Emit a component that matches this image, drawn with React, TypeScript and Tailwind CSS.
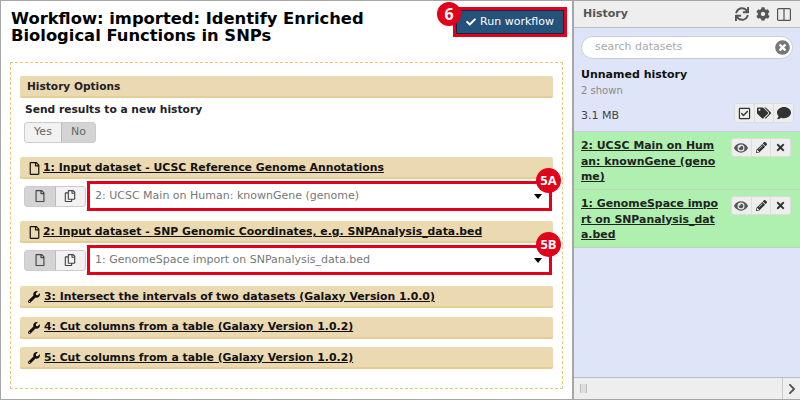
import { FaCheck, FaChevronRight, FaCog, FaComment, FaEye, FaPencilAlt, FaRegCheckSquare, FaRegCopy, FaRegFile, FaSync, FaTags, FaTimes, FaTimesCircle, FaWrench } from "react-icons/fa";
import type { ReactNode } from "react";

const Badge = ({ label, className }: { label: string; className: string }) => (
    <span className={`absolute flex items-center justify-center rounded-full bg-[#e2001a] text-white font-bold font-['Open_Sans',sans-serif] ${className}`}>{label}</span>
);

const SectionHeader = ({ icon, children }: { icon: ReactNode; children: ReactNode }) => (
    <div className="flex items-center gap-[4px] h-[22px] pl-[8px] rounded-[2px] bg-[#ebd9b2] shadow-[inset_0_-2px_0_#e6cd96] text-[10.85px] font-bold text-[#111]">
        {icon}
        <span className="underline">{children}</span>
    </div>
);

const DatasetRow = ({ value, badge }: { value: string; badge: string }) => (
    <div className="relative flex items-center mt-[2px] h-[30px]">
        <div className="flex ml-[4px] h-[21px] w-[62px] rounded-[3px] border border-[#ccc] bg-[#f2f2f2] text-[#444]">
            <span className="flex flex-1 items-center justify-center bg-[#d4d4d4] border-r border-[#bbb]"><FaRegFile size={12} /></span>
            <span className="flex flex-1 items-center justify-center"><FaRegCopy size={12} /></span>
        </div>
        <div className="flex items-center justify-between ml-[1px] h-[30px] w-[465px] border-[3px] border-[#e2001a] bg-white pl-[5px] pr-[7px] text-[11px] text-[#777]">
            <span>{value}</span>
            <span className="w-0 h-0 border-x-[4px] border-x-transparent border-t-[5px] border-t-black" />
        </div>
        <Badge label={badge} className="right-[-8px] top-[-13px] w-[25px] h-[25px] text-[13px]" />
    </div>
);

const HistoryButtons = ({ icons, className }: { icons: ReactNode[]; className: string }) => (
    <div className={`flex rounded-[3px] border border-[#ddd] bg-[#eee] text-[#333] ${className}`}>
        {icons.map((icon, i) => (
            <span key={i} className="flex flex-1 items-center justify-center border-r border-[#ddd] last:border-r-0">{icon}</span>
        ))}
    </div>
);

const Dataset = ({ lines }: { lines: string[] }) => (
    <div className="flex justify-between h-[58px] pl-[7px] pr-[9px] pt-[6px] bg-[#afefaf] border-b border-[#bcd5bc]">
        <div className="text-[10.9px] leading-[15.5px] font-bold text-[#222] underline">
            {lines.map((line) => <div key={line}>{line}</div>)}
        </div>
        <HistoryButtons className="w-[60px] h-[19px]" icons={[<FaEye size={14} className="text-[#555]" />, <FaPencilAlt size={11} />, <FaTimes size={11} />]} />
    </div>
);

export default function App() {
    return (
        <div className="flex w-[800px] h-[400px] border-y border-l border-[#a6a6a6] bg-white font-['DejaVu_Sans',sans-serif] overflow-hidden">
            <main className="w-[571px] shrink-0 px-[9px] pt-[9px]">
                <div className="flex justify-between h-[52px]">
                    <h1 className="w-[390px] pl-[1px] text-[16.35px] leading-[17px] font-bold text-black">Workflow: imported: Identify Enriched Biological Functions in SNPs</h1>
                    <div className="relative -mt-[3px] -mr-[4px]">
                        <div className="h-[30px] w-[114px] border-[3px] border-[#e2001a]">
                            <button className="flex items-center justify-center gap-[4px] h-full w-full border border-[#16293c] bg-[#25527b] text-[11px] text-white">
                                <FaCheck size={10} />
                                Run workflow
                            </button>
                        </div>
                        <Badge label="6" className="left-[-16px] top-[-5px] w-[24px] h-[24px] text-[16px]" />
                    </div>
                </div>
                <section className="h-[327px] border border-dashed border-[#ecc57b] px-[9px] pt-[13px]">
                    <div className="flex items-center h-[22px] pl-[7px] rounded-[2px] bg-[#ebd9b2] shadow-[inset_0_-2px_0_#e6cd96] text-[10.6px] font-bold text-[#222]">History Options</div>
                    <p className="mt-[5px] ml-[5px] text-[10.7px] leading-[14px] font-bold text-[#222]">Send results to a new history</p>
                    <div className="flex mt-[5px] ml-[4px] w-[72px] h-[21px] rounded-[3px] border border-[#ccc] bg-[#f2f2f2] text-[11px] text-[#666]">
                        <span className="flex flex-1 items-center justify-center border-r border-[#bbb]">Yes</span>
                        <span className="flex w-[33px] items-center justify-center bg-[#d4d4d4]">No</span>
                    </div>
                    <div className="mt-[14px]">
                        <SectionHeader icon={<FaRegFile size={13} className="-mr-[2px]" />}>1: Input dataset - UCSC Reference Genome Annotations</SectionHeader>
                        <DatasetRow value="2: UCSC Main on Human: knownGene (genome)" badge="5A" />
                    </div>
                    <div className="mt-[10px]">
                        <SectionHeader icon={<FaRegFile size={13} className="-mr-[2px]" />}>2: Input dataset - SNP Genomic Coordinates, e.g. SNPAnalysis_data.bed</SectionHeader>
                        <DatasetRow value="1: GenomeSpace import on SNPanalysis_data.bed" badge="5B" />
                    </div>
                    <div className="flex flex-col gap-[8.5px] mt-[11px]">
                        <SectionHeader icon={<FaWrench size={12} />}>3: Intersect the intervals of two datasets (Galaxy Version 1.0.0)</SectionHeader>
                        <SectionHeader icon={<FaWrench size={12} />}>4: Cut columns from a table (Galaxy Version 1.0.2)</SectionHeader>
                        <SectionHeader icon={<FaWrench size={12} />}>5: Cut columns from a table (Galaxy Version 1.0.2)</SectionHeader>
                    </div>
                </section>
            </main>
            <aside className="flex flex-col flex-1 border-l-2 border-[#a6a6a6] bg-[#dfe5f9]">
                <div className="flex items-center justify-between h-[27px] pl-[9px] pr-[9px] bg-[#eee] border-b border-[#bbb]">
                    <span className="text-[11px] font-bold text-[#555]">History</span>
                    <div className="flex items-center gap-[7px] text-[#555]">
                        <FaSync size={14} />
                        <FaCog size={14} />
                        <svg width="14" height="13" viewBox="0 0 14 13" fill="none" stroke="currentColor" strokeWidth="1.2"><rect x="0.6" y="0.6" width="12.8" height="11.8" rx="1" /><line x1="7" y1="0.6" x2="7" y2="12.4" /></svg>
                    </div>
                </div>
                <div className="px-[7px] pt-[8px]">
                    <div className="flex items-center justify-between h-[23px] rounded-full border border-[#ccc] bg-white pl-[13px] pr-[2px] text-[11px] text-[#aaa]">
                        search datasets
                        <FaTimesCircle size={15} className="text-[#777]" />
                    </div>
                    <p className="mt-[9px] text-[11px] leading-[14px] font-bold text-[#111]">Unnamed history</p>
                    <p className="mt-[2px] text-[10px] leading-[14px] text-[#888]">2 shown</p>
                    <div className="flex items-end justify-between h-[20px] mt-[5px] -mr-[1px]">
                        <span className="text-[11px] leading-[15px] text-[#444]">3.1 MB</span>
                        <HistoryButtons className="w-[60px] h-[20px]" icons={[<FaRegCheckSquare size={13} />, <FaTags size={14} />, <FaComment size={14} />]} />
                    </div>
                </div>
                <div className="mt-[8px] border-t border-[#ccd]">
                    <Dataset lines={["2: UCSC Main on Hum", "an: knownGene (geno", "me)"]} />
                    <Dataset lines={["1: GenomeSpace impo", "rt on SNPanalysis_dat", "a.bed"]} />
                </div>
                <div className="flex-1" />
                <div className="flex items-center justify-between h-[22px] border-t border-[#bbb] bg-[#eee] pl-[6px]">
                    <span className="w-[7px] h-[9px] border-x border-[#bbb] bg-[#ddd]" />
                    <span className="flex items-center justify-center w-[18px] h-full border-l border-[#ccc] text-[#555]"><FaChevronRight size={12} /></span>
                </div>
            </aside>
        </div>
    );
}
